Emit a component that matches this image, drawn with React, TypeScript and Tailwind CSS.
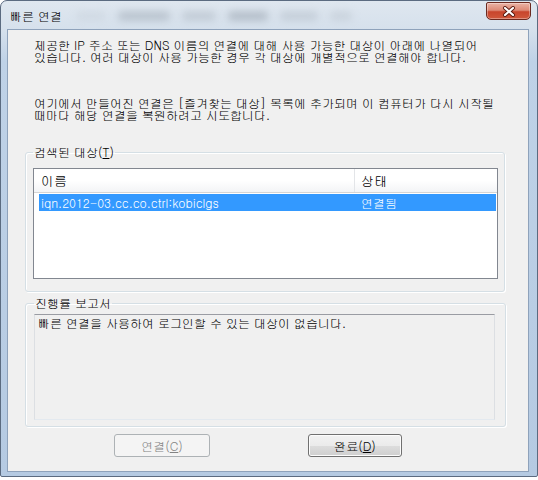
const font = "font-['Gulim','Noto_Sans_CJK_KR','Noto_Sans',sans-serif]";

const CloseButton = () => (
  <button className="mt-[1px] mr-[6px] self-start w-[45px] h-[18px] rounded-b-[5px] rounded-t-[2px] border border-[#6b2a20] bg-[linear-gradient(180deg,#eab3a5_0%,#dd8a76_45%,#c8452c_55%,#d0583c_100%)] shadow-[inset_0_0_0_1px_rgba(255,255,255,0.35)] flex items-center justify-center">
    <svg width="14" height="11" viewBox="0 0 14 11">
      <path d="M3 2 L11 9 M11 2 L3 9" stroke="#5a1a10" strokeWidth="4" strokeLinecap="round" />
      <path d="M3 2 L11 9 M11 2 L3 9" stroke="#ffffff" strokeWidth="2.2" strokeLinecap="round" />
    </svg>
  </button>
);

const Blur = ({ w, tone }: { w: string; tone: string }) => (
  <span className={`${w} ${tone} h-[8px] rounded-[3px] blur-[4px]`} />
);

export default function App() {
  return (
    <div className={`w-[538px] h-[480px] bg-white text-[12px] text-black ${font}`}>
      <div className="w-[538px] h-[477px] flex flex-col rounded-t-[7px] rounded-b-[2px] border border-[#5b6b80] bg-[linear-gradient(180deg,#dfe7ef_0%,#d5e0ec_30px,#bfd2e7_60px,#b5cae2_100%)]">
        {/* title bar */}
        <div className="h-[28px] flex items-center">
          <span className="pl-[9px] pt-[2px] leading-[14px]">빠른 연결</span>
          <div className="flex-1 flex items-center gap-[12px] pl-[14px] pt-[2px] opacity-50">
            <Blur w="w-[30px]" tone="bg-[#c3ccd6]" />
            <Blur w="w-[52px]" tone="bg-[#8c97a3]" />
            <Blur w="w-[34px]" tone="bg-[#a0aab5]" />
            <Blur w="w-[40px]" tone="bg-[#7f8a96]" />
            <Blur w="w-[38px]" tone="bg-[#a7b1bc]" />
            <Blur w="w-[22px]" tone="bg-[#b3bcc6]" />
          </div>
          <CloseButton />
        </div>

        {/* client area */}
        <div className="flex-1 ml-[6px] mr-[8px] mb-[4px] border border-[#8ea2bb] bg-[#f0f0f0] flex flex-col">
          <p className="pl-[26px] pt-[9px] leading-[12px]">
            제공한 IP 주소 또는 DNS 이름의 연결에 대해 사용 가능한 대상이 아래에 나열되어
            <br />
            있습니다. 여러 대상이 사용 가능한 경우 각 대상에 개별적으로 연결해야 합니다.
          </p>
          <p className="pl-[26px] mt-[34px] leading-[12px]">
            여기에서 만들어진 연결은 [즐겨찾는 대상] 목록에 추가되며 이 컴퓨터가 다시 시작될
            <br />
            때마다 해당 연결을 복원하려고 시도합니다.
          </p>

          <fieldset className="mt-[24px] ml-[17px] mr-[23px] px-[7px] pb-[12px] border border-[#d5dfe5] rounded-[3px] shadow-[inset_1px_1px_0_#ffffff,1px_1px_0_#ffffff]">
            <legend className="px-[1px] leading-[14px]">
              검색된 대상(<span className="underline">T</span>)
            </legend>
            <div className="mt-[9px] mr-[-1px] h-[111px] border border-[#828790] bg-white flex flex-col">
              <div className="h-[24px] flex border-b border-[#d5d5d5] bg-[linear-gradient(180deg,#ffffff_0%,#ffffff_50%,#f3f4f6_100%)]">
                <div className="w-[321px] pl-[7px] flex items-center border-r border-[#e3e5e8] text-[13px]">이름</div>
                <div className="pl-[6px] flex items-center text-[13px]">상태</div>
              </div>
              <div className="mt-[1px] ml-[5px] mr-[1px] h-[17px] flex items-center bg-[#3399ff] text-white">
                <div className="w-[316px] pl-[2px]">iqn.2012-03.cc.co.ctrl:kobiclgs</div>
                <div className="pl-[6px]">연결됨</div>
              </div>
            </div>
          </fieldset>

          <fieldset className="mt-[4px] ml-[17px] mr-[22px] pl-[8px] pr-[10px] pb-[6px] border border-[#d5dfe5] rounded-[3px] shadow-[inset_1px_1px_0_#ffffff,1px_1px_0_#ffffff]">
            <legend className="px-[1px] leading-[14px]">진행률 보고서</legend>
            <div className="mt-[4px] h-[106px] border border-t-[#9a9ca3] border-x-[#dcdfe3] border-b-[#e3e9ef] bg-[#f0f0f0] pl-[3px] pt-[1px] leading-[14px]">
              빠른 연결을 사용하여 로그인할 수 있는 대상이 없습니다.
            </div>
          </fieldset>

          <div className="mt-[7px] pl-[106px] flex gap-[98px]">
            <button
              disabled
              className="w-[96px] h-[23px] rounded-[3px] border border-[#adb2b5] bg-[#f4f4f4] text-[#838383] flex items-center justify-center"
            >
              연결(<span className="underline">C</span>)
            </button>
            <button className="w-[94px] h-[23px] rounded-[3px] border border-[#707070] bg-[linear-gradient(180deg,#f2f2f2_0%,#ebebeb_50%,#dddddd_51%,#cfcfcf_100%)] shadow-[inset_0_0_0_1px_#fcfcfc] flex items-center justify-center">
              완료(<span className="underline">D</span>)
            </button>
          </div>
        </div>
      </div>
    </div>
  );
}
